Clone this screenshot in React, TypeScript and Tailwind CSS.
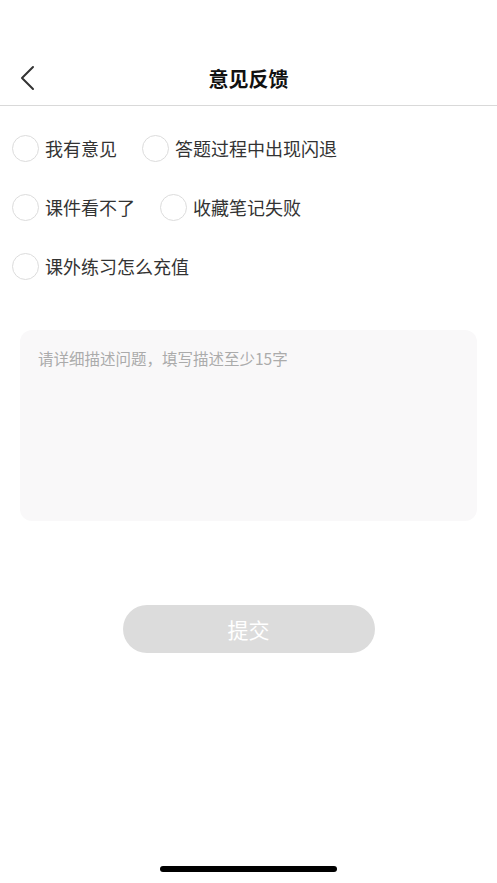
import React, { useState } from "react";

const options = [
  ["我有意见", "答题过程中出现闪退"],
  ["课件看不了", "收藏笔记失败"],
  ["课外练习怎么充值"],
];

function Radio({ label }: { label: string }) {
  return (
    <div className="flex items-center mr-[25px]">
      <div className="w-[27px] h-[27px] rounded-full border border-[#dcdcdc] bg-white" />
      <span className="ml-[6px] text-[18px] leading-[27px] text-[#333333]">{label}</span>
    </div>
  );
}

export default function App() {
  const [text, setText] = useState("");
  return (
    <div
      className="w-[497px] h-[883px] bg-white relative overflow-hidden flex flex-col"
      style={{ fontFamily: '"Noto Sans CJK SC", "Noto Sans", sans-serif' }}
    >
      <div className="h-[53px]" />
      <div className="h-[53px] flex items-center justify-center relative border-b border-[#d9d9d9]">
        <div className="absolute left-[18px] top-[12px]">
          <svg width="20" height="26" viewBox="0 0 20 26" fill="none">
            <path d="M15 2 L4 13 L15 24" stroke="#333" strokeWidth="2" strokeLinecap="round" strokeLinejoin="round" />
          </svg>
        </div>
        <span className="text-[20px] font-bold text-[#111] leading-none">意见反馈</span>
      </div>
      <div className="pl-[12px] pt-[29px] flex flex-col gap-[32px]">
        {options.map((row, i) => (
          <div key={i} className="flex items-center">
            {row.map((o) => (
              <Radio key={o} label={o} />
            ))}
          </div>
        ))}
      </div>
      <div className="mt-[50px] mx-[20px] h-[191px] rounded-[12px] bg-[#f9f8f9] px-[18px] pt-[17px]">
        <textarea
          value={text}
          onChange={(e) => setText(e.target.value)}
          placeholder="请详细描述问题，填写描述至少15字"
          className="w-full h-full bg-transparent resize-none outline-none text-[15.5px] leading-[22px] text-[#333] placeholder:text-[#ababab]"
          style={{ fontFamily: '"Noto Sans CJK SC", "Noto Sans", sans-serif' }}
        />
      </div>
      <div className="mt-[84px] flex justify-center">
        <button className="w-[252px] h-[48px] rounded-full bg-[#dcdcdc] text-white text-[21px] leading-none">
          提交
        </button>
      </div>
      <div className="absolute left-[160px] top-[866px] w-[177px] h-[6px] rounded-full bg-black" />
    </div>
  );
}
